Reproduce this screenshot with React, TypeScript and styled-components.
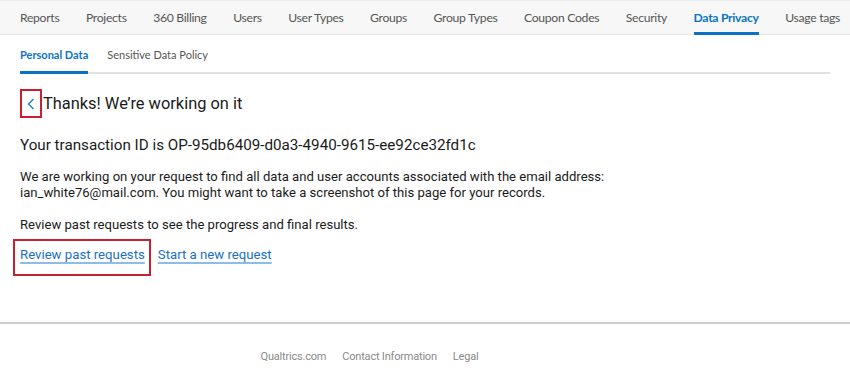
import React from 'react';
import styled, { createGlobalStyle } from 'styled-components';

const GlobalStyle = createGlobalStyle`
  html, body {
    margin: 0;
    padding: 0;
    background: #ffffff;
  }
  body {
    font-family: Roboto, "Liberation Sans", sans-serif;
    color: #1a1a1a;
  }
`;

const Page = styled.div`
  width: 850px;
  height: 371px;
  overflow: hidden;
  display: flex;
  flex-direction: column;
`;

const TopNav = styled.nav`
  height: 35px;
  box-sizing: border-box;
  background: #f7f7f7;
  border-top: 1px solid #ececec;
  border-bottom: 1px solid #e4e4e4;
  display: flex;
  align-items: stretch;
  padding-left: 20px;
  gap: 26.5px;
`;

const TopTab = styled.a<{ $active?: boolean }>`
  display: flex;
  align-items: center;
  font-family: Lato, "Liberation Sans", sans-serif;
  font-size: 12.2px;
  letter-spacing: -0.3px;
  white-space: nowrap;
  color: ${(p) => (p.$active ? '#0b73c6' : '#555555')};
  font-weight: ${(p) => (p.$active ? 700 : 400)};
  border-bottom: 3px solid ${(p) => (p.$active ? '#0b73c6' : 'transparent')};
  margin-bottom: -1px;
  padding-top: 2px;
`;

const SubNav = styled.nav`
  margin: 0 20px;
  height: 39px;
  box-sizing: border-box;
  border-bottom: 2px solid #e2e2e2;
  display: flex;
  gap: 19px;
`;

const SubTab = styled.a<{ $active?: boolean }>`
  display: flex;
  align-items: center;
  font-family: Lato, "Liberation Sans", sans-serif;
  font-size: 11px;
  white-space: nowrap;
  color: ${(p) => (p.$active ? '#0b73c6' : '#555555')};
  font-weight: ${(p) => (p.$active ? 700 : 400)};
  border-bottom: 3px solid ${(p) => (p.$active ? '#0b73c6' : 'transparent')};
  margin-bottom: -2px;
  padding-top: 2px;
`;

const Content = styled.main`
  padding: 15px 20px 0;
  height: 248px;
  box-sizing: border-box;
`;

const TitleRow = styled.div`
  display: flex;
  align-items: center;
  gap: 1px;
`;

const BackButton = styled.button`
  width: 22px;
  height: 29px;
  border: 2px solid #c8202f;
  background: transparent;
  padding: 0;
  display: flex;
  align-items: center;
  justify-content: center;
  color: #1a7fd0;
  cursor: pointer;
`;

const Title = styled.h1`
  margin: 0;
  font-size: 16.4px;
  font-weight: 400;
`;

const TransactionId = styled.p`
  margin: 17px 0 0;
  font-size: 15.2px;
  line-height: 20px;
`;

const Body = styled.p<{ $gap: number }>`
  margin: ${(p) => p.$gap}px 0 0;
  font-size: 13.1px;
  line-height: 16px;
`;

const Links = styled.div`
  display: flex;
  gap: 13px;
  margin-top: 14px;
`;

const Link = styled.a<{ $marked?: boolean }>`
  position: relative;
  font-size: 13.2px;
  line-height: 16px;
  color: #1a6fc8;
  text-decoration: underline;
  text-decoration-color: #8fbbe8;
  text-decoration-thickness: 2px;
  text-underline-offset: 3px;
  cursor: pointer;

  ${(p) =>
    p.$marked &&
    `
    &::after {
      content: '';
      position: absolute;
      left: -7px;
      right: -6px;
      top: -8px;
      bottom: -13px;
      border: 2px solid #c8202f;
    }
  `}
`;

const Footer = styled.footer`
  border-top: 2px solid #cfcfcf;
  flex: 1;
  display: flex;
  justify-content: center;
  align-items: flex-start;
  padding-top: 26px;
  padding-right: 111px;
  gap: 16px;
`;

const FooterLink = styled.a`
  font-family: Roboto, "Liberation Sans", sans-serif;
  font-size: 11px;
  letter-spacing: -0.2px;
  color: #8a8a8a;
`;

const tabs = [
  'Reports',
  'Projects',
  '360 Billing',
  'Users',
  'User Types',
  'Groups',
  'Group Types',
  'Coupon Codes',
  'Security',
  'Data Privacy',
  'Usage tags',
];

const ChevronLeft = () => (
  <svg width="8" height="12" viewBox="0 0 8 12" fill="none">
    <path d="M6.5 1 L1.5 6 L6.5 11" stroke="currentColor" strokeWidth="1.4" />
  </svg>
);

export default function App() {
  return (
    <Page>
      <GlobalStyle />
      <TopNav>
        {tabs.map((t) => (
          <TopTab key={t} $active={t === 'Data Privacy'}>
            {t}
          </TopTab>
        ))}
      </TopNav>
      <SubNav>
        <SubTab $active>Personal Data</SubTab>
        <SubTab>Sensitive Data Policy</SubTab>
      </SubNav>
      <Content>
        <TitleRow>
          <BackButton aria-label="Back">
            <ChevronLeft />
          </BackButton>
          <Title>Thanks! We’re working on it</Title>
        </TitleRow>
        <TransactionId>Your transaction ID is OP-95db6409-d0a3-4940-9615-ee92ce32fd1c</TransactionId>
        <Body $gap={14}>
          We are working on your request to find all data and user accounts associated with the email address:
          <br />
          ian_white76@mail.com. You might want to take a screenshot of this page for your records.
        </Body>
        <Body $gap={16}>Review past requests to see the progress and final results.</Body>
        <Links>
          <Link $marked>Review past requests</Link>
          <Link>Start a new request</Link>
        </Links>
      </Content>
      <Footer>
        <FooterLink>Qualtrics.com</FooterLink>
        <FooterLink>Contact Information</FooterLink>
        <FooterLink>Legal</FooterLink>
      </Footer>
    </Page>
  );
}
